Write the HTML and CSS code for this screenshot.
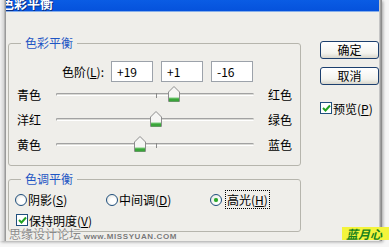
FILE: index.html
```html
<!DOCTYPE html>
<html lang="zh-CN">
<head>
    <meta charset="UTF-8">
    <title>色彩平衡</title>
    <link rel="stylesheet" href="styles.css">
</head>
<body>
    <div class="window">
        <div class="titlebar"><span class="title">色彩平衡</span></div>
        <div class="frame">
            <div class="main">
                <fieldset class="group balance">
                    <legend>色彩平衡</legend>
                    <div class="levels">
                        <label class="levels-label">色阶(<u>L</u>):</label>
                        <input class="num" type="text" value="+19">
                        <input class="num" type="text" value="+1">
                        <input class="num" type="text" value="-16">
                    </div>

                    <!-- slider range is -100..100, thumb left = (value + 100) / 2 % -->
                    <div class="slider-row">
                        <span class="lbl">青色</span>
                        <div class="track">
                            <span class="tick"></span>
                            <span class="thumb" style="left: 59.5%">
                                <svg width="12" height="16" viewBox="0 0 12 16"><path d="M0.5 6 L6 0.5 L11.5 6 L11.5 15.5 L0.5 15.5 Z" fill="#f6f6f4" stroke="#8c8c8c"/><rect x="1" y="12" width="10" height="3.5" fill="#3aa53a"/><line x1="1" y1="12" x2="11" y2="12" stroke="#7ccf7c"/></svg>
                            </span>
                        </div>
                        <span class="lbl-r">红色</span>
                    </div>
                    <div class="slider-row">
                        <span class="lbl">洋红</span>
                        <div class="track">
                            <span class="tick"></span>
                            <span class="thumb" style="left: 50.5%">
                                <svg width="12" height="16" viewBox="0 0 12 16"><path d="M0.5 6 L6 0.5 L11.5 6 L11.5 15.5 L0.5 15.5 Z" fill="#f6f6f4" stroke="#8c8c8c"/><rect x="1" y="12" width="10" height="3.5" fill="#3aa53a"/><line x1="1" y1="12" x2="11" y2="12" stroke="#7ccf7c"/></svg>
                            </span>
                        </div>
                        <span class="lbl-r">绿色</span>
                    </div>
                    <div class="slider-row">
                        <span class="lbl">黄色</span>
                        <div class="track">
                            <span class="tick"></span>
                            <span class="thumb" style="left: 42%">
                                <svg width="12" height="16" viewBox="0 0 12 16"><path d="M0.5 6 L6 0.5 L11.5 6 L11.5 15.5 L0.5 15.5 Z" fill="#f6f6f4" stroke="#8c8c8c"/><rect x="1" y="12" width="10" height="3.5" fill="#3aa53a"/><line x1="1" y1="12" x2="11" y2="12" stroke="#7ccf7c"/></svg>
                            </span>
                        </div>
                        <span class="lbl-r">蓝色</span>
                    </div>
                </fieldset>

                <fieldset class="group tone">
                    <legend>色调平衡</legend>
                    <div class="radios">
                        <label class="opt"><span class="radio"></span>阴影(<u>S</u>)</label>
                        <label class="opt"><span class="radio"></span>中间调(<u>D</u>)</label>
                        <label class="opt"><span class="radio on"></span><span class="focus">高光(<u>H</u>)</span></label>
                    </div>
                    <label class="opt keep">
                        <span class="check"><svg width="9" height="9" viewBox="0 0 9 9"><path d="M1 4 L3.5 6.5 L8 1.5" fill="none" stroke="#21a121" stroke-width="2"/></svg></span>保持明度(<u>V</u>)
                    </label>
                </fieldset>
            </div>

            <div class="side">
                <button class="btn">确定</button>
                <button class="btn">取消</button>
                <label class="opt preview">
                    <span class="check"><svg width="9" height="9" viewBox="0 0 9 9"><path d="M1 4 L3.5 6.5 L8 1.5" fill="none" stroke="#21a121" stroke-width="2"/></svg></span>预览(<u>P</u>)
                </label>
            </div>
        </div>
    </div>

    <div class="watermark">思缘设计论坛 <span class="site">www.MISSYUAN.COM</span></div>
    <div class="badge">蓝月心</div>
</body>
</html>
```

FILE: styles.css
```css
body {
    margin: 0;
    width: 389px;
    height: 247px;
    overflow: hidden;
    position: relative;
    background: #f6f6f6;
    font-family: "Noto Sans CJK SC", "Liberation Sans", sans-serif;
    font-size: 12px;
    color: #000;
}
.window {
    width: 382px;
    height: 241px;
    box-sizing: border-box;
    padding: 0 3px 0 6px;
    display: flex;
    flex-direction: column;
    background: linear-gradient(to right, #f2f2f2 0, #d4d4d4 4px, #9a9a9a 5px, #9a9a9a 6px, #efeeea 6px, #efeeea calc(100% - 3px), #d8d8d8 calc(100% - 3px), #8c8c8c calc(100% - 1px));
    box-shadow: 1px 1px 3px rgba(0, 0, 0, 0.35);
}
.titlebar {
    height: 11px;
    overflow: hidden;
    background: linear-gradient(#0a5ce4, #0552dc);
    border-bottom: 1px solid #86aeea;
}
.title {
    display: block;
    margin: -4px 0 0 -5px;
    line-height: 14px;
    font-size: 13px;
    font-weight: bold;
    color: #fff;
    text-shadow: 1px 1px 0 #0b2f80;
}
.frame {
    flex: 1;
    display: flex;
    padding-left: 2px;
}
.main {
    width: 294px;
}
.group {
    margin: 0;
    padding: 0;
    border: 1px solid #b6b5ad;
    border-radius: 3px;
}
.group legend {
    margin-left: 12px;
    padding: 0 4px;
    line-height: 14px;
    color: #1f56c4;
}
.balance {
    margin-top: 24px;
    padding-bottom: 8px;
}
.levels {
    display: flex;
    align-items: center;
    margin-top: 11px;
    height: 21px;
}
.levels-label {
    width: 95px;
    margin-right: 7px;
    text-align: right;
}
.num {
    width: 42px;
    height: 21px;
    box-sizing: border-box;
    margin: 0 8px 0 0;
    padding: 0 5px;
    border: 1px solid #9ca2aa;
    font: inherit;
    background: #fff;
}
.slider-row {
    display: flex;
    align-items: center;
    height: 25px;
}
.slider-row:first-of-type {
    margin-top: 7px;
}
.lbl {
    width: 39px;
    padding-left: 8px;
}
.track {
    position: relative;
    width: 197px;
    height: 1px;
    border-top: 1px solid #a2a2a2;
    border-bottom: 1px solid #ffffff;
    border-left: 1px solid #a2a2a2;
    border-radius: 2px;
    background: #dadad6;
}
.tick {
    position: absolute;
    left: 50%;
    top: -1px;
    width: 1px;
    height: 5px;
    background: #8a8a8a;
}
.thumb {
    position: absolute;
    top: -8px;
    margin-left: -6px;
    width: 12px;
    height: 16px;
}
.thumb svg {
    display: block;
}
.lbl-r {
    margin-left: 14px;
}
.tone {
    margin-top: 6px;
    padding-bottom: 3px;
}
.radios {
    display: grid;
    grid-template-columns: 91px 104px auto;
    margin-top: 4px;
    padding-left: 6px;
    height: 16px;
    align-items: center;
}
.opt {
    display: flex;
    align-items: center;
    white-space: nowrap;
}
.radio {
    width: 12px;
    height: 12px;
    box-sizing: border-box;
    margin-right: 1px;
    border: 1px solid #1f4f7d;
    border-radius: 50%;
    background: radial-gradient(circle at 60% 60%, #ffffff 30%, #dcdcd6 100%);
    position: relative;
}
.radio.on::after {
    content: "";
    position: absolute;
    left: 3px;
    top: 3px;
    width: 4px;
    height: 4px;
    border-radius: 50%;
    background: #2aa72a;
    box-shadow: 0 0 1px #7ccf7c;
}
.focus {
    margin-left: 2px;
    padding: 0 1px;
    border: 1px dotted #000;
}
.check {
    width: 12px;
    height: 12px;
    box-sizing: border-box;
    margin-right: 1px;
    border: 1px solid #1f4f7d;
    background: #fff;
    display: flex;
    align-items: center;
    justify-content: center;
}
.keep {
    margin-top: 6px;
    padding-left: 7px;
    height: 16px;
}
.side {
    margin-left: 19px;
    display: flex;
    flex-direction: column;
    padding-top: 29px;
}
.btn {
    width: 59px;
    height: 18px;
    padding: 0;
    border: 1px solid #1c3f6e;
    border-radius: 3px;
    background: linear-gradient(#ffffff, #f3f3ee 70%, #d8d6cc);
    font: inherit;
    line-height: 14px;
}
.btn + .btn {
    margin-top: 8px;
}
.preview {
    margin-top: 16px;
    height: 14px;
}
.watermark {
    position: absolute;
    left: 9px;
    top: 227px;
    color: #8a8a8a;
    font-size: 12px;
    line-height: 13px;
    text-shadow: 0 0 1px #fff;
}
.site {
    font-family: "Liberation Sans", sans-serif;
    font-size: 8px;
    font-weight: bold;
    letter-spacing: 0.6px;
    color: #777;
}
.badge {
    position: absolute;
    left: 342px;
    top: 227px;
    width: 50px;
    height: 13px;
    padding-left: 4px;
    background: #f4f43c;
    color: #17821c;
    font-size: 12px;
    line-height: 13px;
    font-weight: bold;
    font-style: italic;
}
```
